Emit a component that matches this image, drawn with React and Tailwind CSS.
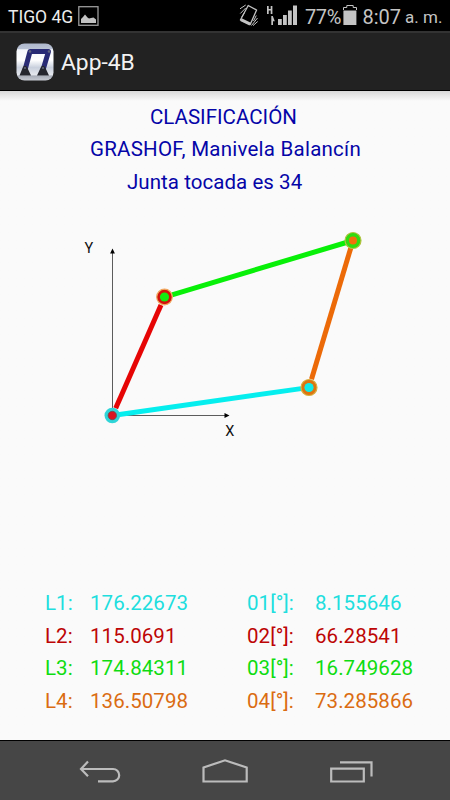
import React from 'react'

const links = [
    { id: 1, length: '176.22673', angle: '8.155646', color: 'text-[#20dede]' },
    { id: 2, length: '115.0691', angle: '66.28541', color: 'text-[#bd0505]' },
    { id: 3, length: '174.84311', angle: '16.749628', color: 'text-[#0edc10]' },
    { id: 4, length: '136.50798', angle: '73.285866', color: 'text-[#da6c12]' }
]

const StatusBar = () => {
    return (
        <div className="flex h-[31px] items-start bg-black text-[#c4c4c4]">
            <span className="ml-2 mt-[7px] w-[65px] whitespace-nowrap text-[17.5px] leading-[21px] text-[#ececec]">TIGO 4G</span>
            <svg className="ml-[5px] mt-[6px]" width="21" height="20" viewBox="0 0 21 20">
                <rect x="0.8" y="0.7" width="19.2" height="18.6" fill="none" stroke="#9a9a9a" strokeWidth="1.3" />
                <path d="M3 17v-4l2-2 2-2.500 2.500 3 1.500 1 2-.5 2.500-.5 2.500 2V17z" fill="#c2c2c2" />
            </svg>
            <svg className="ml-[140px] mt-[4px] shrink-0" width="20" height="23" viewBox="0 0 20 23" fill="none" stroke="#c4c4c4">
                <path d="M9.2 1.5L17.6 6 11.2 20.5 1.4 16z" strokeWidth="1.3" strokeLinejoin="round" />
                <path d="M2 15.6l9.2 4.6" strokeWidth="3" />
                <path d="M6.7 1L1 4.8M6.7 4L1.3 9.5M5.8 8L2.8 13M18.5 14l-6 7.5M18.7 17.5L14 21.6M17.3 11.5L14.5 17" strokeWidth="1" />
            </svg>
            <svg className="ml-[7px] mt-[5px] shrink-0" width="32" height="21" viewBox="0 0 32 21" fill="#c4c4c4">
                <path d="M1 1h1.7v3h2V1h1.7v8H4.7V5.5h-2V9H1z" />
                <path d="M5.3 11h1.5l2 5.2H7V20H5.3z" />
                <path d="M12 14h3.8v6H12zM17 10h3.8V20H17zM22 5.5h3.8V20H22zM27 0.5h4V20h-4z" />
            </svg>
            <span className="ml-[7px] mt-[6px] w-[38px] whitespace-nowrap text-[20px] leading-[22px] tracking-[-0.4px]">77%</span>
            <svg className="mt-[5px] shrink-0" width="14" height="21" viewBox="0 0 14 21">
                <path d="M0.5 5V2.5h3.3V0.5h6.4v2h3.3V5" fill="none" stroke="#c4c4c4" strokeWidth="1" />
                <path d="M0.4 5.5h13V20H0.4z" fill="#c4c4c4" />
            </svg>
            <span className="ml-[5.5px] mt-[6px] whitespace-nowrap text-[20px] leading-[22px]">8:07</span>
            <span className="ml-[4px] mt-[5px] whitespace-nowrap text-[17px] leading-[24px]">a. m.</span>
        </div>
    )
}

const AppLogo = () => {
    return (
        <svg width="38" height="38" viewBox="0 0 38 38">
            <defs>
                <linearGradient id="logoBg" x1="0" y1="0" x2="0" y2="1">
                    <stop offset="0" stopColor="#aeb7cc" />
                    <stop offset="0.14" stopColor="#b9c2d4" />
                    <stop offset="0.17" stopColor="#f6f8fc" />
                    <stop offset="0.45" stopColor="#ffffff" />
                    <stop offset="0.65" stopColor="#c9d0dd" />
                    <stop offset="0.84" stopColor="#e4e7ed" />
                    <stop offset="0.88" stopColor="#a9aeb9" />
                    <stop offset="1" stopColor="#c5c9d1" />
                </linearGradient>
            </defs>
            <rect x="0.5" y="0.5" width="37" height="37" rx="8" fill="url(#logoBg)" />
            <path d="M9 27L14 8.5H32.5L27 27" fill="none" stroke="#292b75" strokeWidth="5" strokeLinejoin="round" />
            <path d="M3.5 32.5L7 24q2-2.6 4 0l4 8.5zM21 32.5L25 24q2-2.6 4 0l4 8.5z" fill="#24262e" />
            <circle cx="14" cy="8.5" r="1.3" fill="#62657c" />
            <circle cx="33" cy="8.5" r="1.3" fill="#62657c" />
            <circle cx="9" cy="25" r="1" fill="#62657c" />
            <circle cx="27" cy="25" r="1" fill="#62657c" />
        </svg>
    )
}

// Four-bar linkage with its X and Y axes
const Mechanism = () => {
    return (
        <svg className="block" width="450" height="250" viewBox="0 200 450 250">
            <path d="M112.5 415.5V253M112.5 415.5H226" stroke="#5c5c5c" strokeWidth="1" />
            <path d="M112.5 248.5l2.4 5h-4.8zM229.5 415.5l-5-2.4v4.8z" fill="#000" />
            <text x="84.6" y="253" fontSize="14.5" fill="#111">Y</text>
            <text x="225.3" y="435.5" fontSize="14.5" fill="#111">X</text>

            <path d="M112.5 415.5L301.1 388.6" stroke="#05eeee" strokeWidth="5" />
            <path d="M115.7 408.2L161 305" stroke="#e60505" strokeWidth="5" />
            <path d="M172 294.8L353 240.5" stroke="#08f008" strokeWidth="5" />
            <path d="M350.7 248.2L311.5 379.2" stroke="#ec6a08" strokeWidth="5" />

            <circle cx="112.3" cy="415.5" r="7.8" fill="#2fd5d8" />
            <circle cx="112.3" cy="415.5" r="4.2" fill="#dc1420" stroke="#6b4a50" strokeWidth="0.8" />
            <circle cx="164.5" cy="297" r="7.8" fill="#d4100c" stroke="#f0a860" strokeWidth="1.2" />
            <circle cx="164.5" cy="297" r="4.6" fill="#14ea10" />
            <circle cx="353" cy="240.5" r="8" fill="#30dc10" stroke="#b4c040" strokeWidth="1.2" />
            <circle cx="353" cy="240.5" r="4" fill="#f0700c" />
            <circle cx="309" cy="387.5" r="8" fill="#de7410" stroke="#d8b040" strokeWidth="1.2" />
            <circle cx="309" cy="387.5" r="4.6" fill="#10ecea" />
        </svg>
    )
}

const NavBar = () => {
    return (
        <div className="flex h-[60px] border-t border-black bg-[#464646]">
            <svg width="450" height="59" viewBox="0 741 450 59" fill="none" stroke="#bcbcbc" strokeWidth="2.2">
                <path d="M88 761.5L81 769l7 7.3M81 769h32a6.2 6.2 0 0 1 0 12.4H98" />
                <path d="M203.5 781.5V767.5L225 760.3l21.7 7.2v14z" />
                <path d="M331.2 768.7h32.6v12.8h-32.6zM340 762.3h31.5V776.5" />
            </svg>
        </div>
    )
}

const App = () => {
    return (
        <div className="flex h-[800px] w-[450px] flex-col overflow-hidden bg-[#fafafa] font-['Roboto',sans-serif]">
            <StatusBar />
            <header className="flex h-[60px] items-center border-t-2 border-b border-t-[#333333] border-b-black bg-[#222222] pl-4">
                <AppLogo />
                <h1 className="ml-[7px] pt-[2px] text-[22.8px] leading-[26px] text-[#f2f2f2]">App-4B</h1>
            </header>

            <main className="flex flex-1 flex-col bg-linear-to-b from-[#d9d9d9] to-[#fafafa] to-[10px]">
                <div className="flex h-[109px] flex-col pt-[10px] text-[20.5px] leading-[32.4px] text-[#0505a8]">
                    <p className="pl-[150px]">CLASIFICACIÓN</p>
                    <p className="pl-[90px] tracking-[0.24px]">GRASHOF, Manivela Balancín</p>
                    <p className="pl-[127px] tracking-[0.05px]">Junta tocada es 34</p>
                </div>

                <Mechanism />

                <div className="mt-auto pb-[23px] text-[20.5px] leading-[32.4px] tracking-[0.05px]">
                    {links.map((link) => (
                        <div key={link.id} className={`flex whitespace-nowrap pl-[45px] ${link.color}`}>
                            <span className="w-[45px]">L{link.id}:</span>
                            <span className="w-[157px]">{link.length}</span>
                            <span className="w-[68px]">0{link.id}[°]:</span>
                            <span>{link.angle}</span>
                        </div>
                    ))}
                </div>
            </main>

            <NavBar />
        </div>
    )
}

export default App
